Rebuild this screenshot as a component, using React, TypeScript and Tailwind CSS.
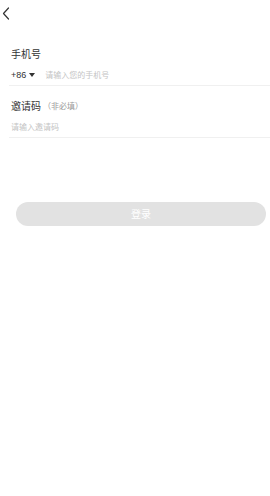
import React from "react";

export default function App() {
  return (
    <div
      className="w-[270px] h-[496px] bg-white text-[#333]"
      style={{ fontFamily: '"Noto Sans CJK SC", "Noto Sans", sans-serif' }}
    >
      <div className="h-[26px] flex items-center pl-[2px]">
        <svg width="8" height="13" viewBox="0 0 8 13" fill="none">
          <path d="M6.5 1 L1.5 6.5 L6.5 12" stroke="#333" strokeWidth="1.2" strokeLinecap="round" strokeLinejoin="round" />
        </svg>
      </div>

      <div className="ml-[9px] mt-[21px]">
        <div className="pl-[2px] h-[14px] flex items-center text-[10px] leading-[14px] text-[#333]">手机号</div>
        <div className="mt-[2px] h-[23px] pt-[2px] flex items-center pl-[2px] border-b border-[#f0f0f0]">
          <span className="text-[9px] text-[#333] leading-none" style={{ fontFamily: '"Liberation Sans", sans-serif' }}>+86</span>
          <svg className="ml-[3px]" width="6" height="4" viewBox="0 0 6 4">
            <path d="M0 0 L6 0 L3 4 Z" fill="#333" />
          </svg>
          <span className="ml-[10px] text-[8px] text-[#c4c4c4] leading-none">请输入您的手机号</span>
        </div>

        <div className="mt-[13px] pl-[2px] h-[14px] flex items-center">
          <span className="text-[10px] leading-[14px] text-[#333]">邀请码</span>
          <span className="ml-[2px] text-[8px] leading-[14px] text-[#999]">（非必填）</span>
        </div>
        <div className="mt-[2px] h-[23px] pt-[2px] flex items-center pl-[2px] border-b border-[#f0f0f0]">
          <span className="text-[8px] text-[#c4c4c4] leading-none">请输入邀请码</span>
        </div>
      </div>

      <div className="mt-[64px] ml-[16px] w-[250px] h-[24px] rounded-full bg-[#e2e2e2] flex items-center justify-center">
        <span className="text-[10px] text-white leading-none">登录</span>
      </div>
    </div>
  );
}
